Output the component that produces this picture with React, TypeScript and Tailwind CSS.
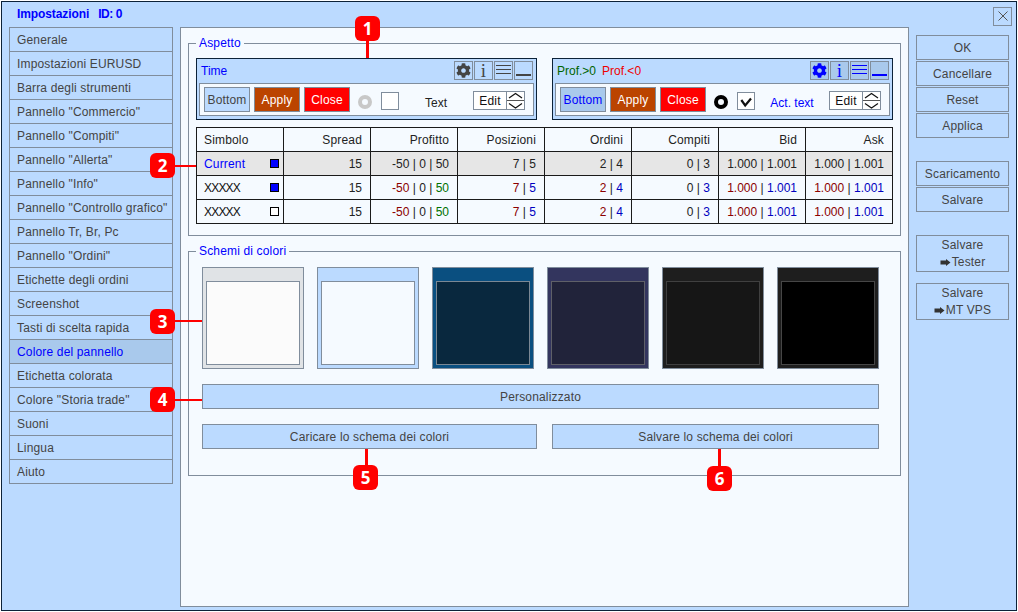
import { FaCog } from "react-icons/fa";

const menu = [
  "Generale",
  "Impostazioni EURUSD",
  "Barra degli strumenti",
  'Pannello "Commercio"',
  'Pannello "Compiti"',
  'Pannello "Allerta"',
  'Pannello "Info"',
  'Pannello "Controllo grafico"',
  "Pannello Tr, Br, Pc",
  'Pannello "Ordini"',
  "Etichette degli ordini",
  "Screenshot",
  "Tasti di scelta rapida",
  "Colore del pannello",
  "Etichetta colorata",
  'Colore "Storia trade"',
  "Suoni",
  "Lingua",
  "Aiuto",
];

const swatches = [
  { outer: "bg-[#e0e3e6] border-[#808d9c]", inner: "bg-[#fbfbfb] border-[#808d9c]" },
  { outer: "bg-[#bbdaff] border-[#808d9c]", inner: "bg-[#f5faff] border-[#808d9c]" },
  { outer: "bg-[#0a4f80] border-[#808d9c]", inner: "bg-[#09283e] border-[#7b8894]" },
  { outer: "bg-[#33355e] border-[#808d9c]", inner: "bg-[#21233a] border-[#5f6068]" },
  { outer: "bg-[#1e1e1e] border-[#808d9c]", inner: "bg-[#161616] border-[#404040]" },
  { outer: "bg-[#1e1e1e] border-[#808d9c]", inner: "bg-black border-[#464646]" },
];

const Btn = ({ children, className = "" }: { children: React.ReactNode; className?: string }) => (
  <div className={`flex items-center justify-center border border-[#808d9c] bg-[#bbdaff] text-[#444] ${className}`}>
    {children}
  </div>
);

const Arrow = () => (
  <svg width="11" height="7" viewBox="0 0 11 7" className="mr-[1px]">
    <path d="M0.5 1.5h5.5V0l4.5 3.5-4.5 3.5V5.5H0.5z" fill="#333" />
  </svg>
);

// Titlebar + button row preview, one for inactive and one for active colours
const PanelPreview = ({ active }: { active: boolean }) => {
  const ink = active ? "#0000ff" : "#444444";
  const iconBox = `flex h-[19px] w-[19px] items-center justify-center border border-[#808d9c] ${
    active ? "bg-[#a9c9ec]" : "bg-[#bbdaff]"
  }`;
  return (
    <div className="h-[62px] w-[341px] border border-[#0c2238] bg-[#bbdaff]">
      <div className="flex h-[24px] items-start pr-[3px]">
        <div className="flex h-[24px] flex-1 items-center pl-[4px] tracking-normal">
          {active ? (
            <>
              <span className="text-[#006400]">Prof.&gt;0</span>
              <span className="ml-[6px] text-[#ee0000]">Prof.&lt;0</span>
            </>
          ) : (
            <span className="text-[#0000ff]">Time</span>
          )}
        </div>
        <div className="mt-[2px] flex gap-[1px]">
          <div className={iconBox}>
            <FaCog size={15} color={ink} />
          </div>
          <div className={`${iconBox} font-['Liberation_Serif'] text-[19px] leading-none`} style={{ color: ink }}>
            i
          </div>
          <div className={iconBox}>
            <svg width="15" height="11" viewBox="0 0 15 11">
              <path d="M0 .5h15M0 4.5h15M0 8.5h15" stroke={ink} strokeWidth="1" />
            </svg>
          </div>
          <div className={iconBox}>
            <svg width="15" height="15" viewBox="0 0 15 15">
              <path d="M0 12h15" stroke={ink} strokeWidth="2" />
            </svg>
          </div>
        </div>
      </div>
      <div className="mx-[2px] flex h-[33px] items-start border border-[#808d9c] bg-[#f5faff] pl-[4px]">
        <div
          className={`mt-[3px] flex h-[25px] w-[46px] items-center justify-center border border-[#808d9c] ${
            active ? "bg-[#a9c9ec] text-[#0000ff]" : "bg-[#bbdaff] text-[#444]"
          }`}
        >
          Bottom
        </div>
        <div className="mt-[3px] ml-[4px] flex h-[25px] w-[46px] items-center justify-center border border-[#808d9c] bg-[#bb4400] text-white">
          Apply
        </div>
        <div className="mt-[3px] ml-[4px] flex h-[25px] w-[46px] items-center justify-center border border-[#808d9c] bg-[#ff0000] text-white">
          Close
        </div>
        <div
          className={`mt-[11px] ml-[8px] h-[14px] w-[14px] rounded-full border-[4px] ${
            active ? "border-black" : "border-[#c8c8c8]"
          }`}
        />
        <div className="mt-[8px] ml-[9px] h-[18px] w-[18px] border border-[#808d9c] bg-white">
          {active && (
            <svg width="16" height="16" viewBox="0 0 16 16">
              <path d="M3.3 7 7.2 12.5 13 5.5" fill="none" stroke="#111" strokeWidth="2.2" />
            </svg>
          )}
        </div>
        <div className={`mt-[12px] flex-1 text-center tracking-normal ${active ? "text-[#0000ff]" : "text-[#222]"}`}>
          {active ? "Act. text" : "Text"}
        </div>
        <div className="mt-[7px] mr-[8px] flex h-[19px] w-[52px] border border-[#808d9c] bg-white">
          <div className="flex w-[33px] items-center justify-center border-r border-[#808d9c] text-[#111]">Edit</div>
          <svg width="17" height="17" viewBox="0 0 17 17">
            <path d="M2 6 8.5 1.5 15 6M2 11.5 8.5 16 15 11.5" fill="none" stroke="#111" strokeWidth="1.2" />
            <path d="M0 8.5h17" stroke="#555" strokeWidth="1" />
          </svg>
        </div>
      </div>
    </div>
  );
};

const red = "text-[#8b0000]";
const blue = "text-[#0000c0]";
const green = "text-[#007000]";

const Pair = ({ a, b, color }: { a: string; b: string; color: boolean }) => (
  <>
    <span className={color ? red : ""}>{a}</span> | <span className={color ? blue : ""}>{b}</span>
  </>
);

const DataRow = ({ name, square, colored }: { name: string; square: string; colored: boolean }) => {
  const td = "border border-[#1a1a1a] px-[8px] text-right tracking-normal";
  return (
    <tr className={`h-[24px] text-[#222] ${colored ? "" : "bg-[#e6e6e6]"}`}>
      <td className="border border-[#1a1a1a] pl-[7px] pr-[4px]">
        <div className={`flex items-center justify-between ${colored ? "text-[#111]" : "text-[#0000ff]"}`}>
          <span className={colored ? "tracking-[-0.8px]" : ""}>{name}</span>
          <span className={`h-[9px] w-[9px] border border-black ${square}`} />
        </div>
      </td>
      <td className={td}>15</td>
      <td className={td}>
        <span className={colored ? red : ""}>-50</span> | 0 | <span className={colored ? green : ""}>50</span>
      </td>
      <td className={td}>
        <Pair a="7" b="5" color={colored} />
      </td>
      <td className={td}>
        <Pair a="2" b="4" color={colored} />
      </td>
      <td className={td}>
        0 | <span className={colored ? blue : ""}>3</span>
      </td>
      <td className={td}>
        <Pair a="1.000" b="1.001" color={colored} />
      </td>
      <td className={td}>
        <Pair a="1.000" b="1.001" color={colored} />
      </td>
    </tr>
  );
};

const Marker = ({ n, className }: { n: number; className: string }) => (
  <div
    className={`absolute flex h-[25px] w-[25px] items-center justify-center rounded-[6px] bg-[#ff0000] font-['Open_Sans'] text-[17px] font-bold tracking-normal text-white ${className}`}
  >
    {n}
  </div>
);

export default function App() {
  return (
    <div className="relative h-[612px] w-[1018px] overflow-hidden bg-white pt-[1px] pl-[1px] font-['Liberation_Sans',sans-serif] text-[12px] leading-[14px] tracking-[0.16px]">
      <div className="h-[610px] w-[1016px] border border-[#0c2238] bg-[#bbdaff]">
        {/* Title */}
        <div className="flex h-[25px] items-center justify-between pr-[4px] pl-[15px]">
          <div className="mb-[2px] flex gap-[9px] font-bold text-[#0000ff]">
            <span className="tracking-[-0.1px]">Impostazioni</span>
            <span className="tracking-[-0.4px]">ID: 0</span>
          </div>
          <div className="mt-[3px] flex h-[19px] w-[19px] items-center justify-center border border-[#808d9c]">
            <svg width="10" height="10" viewBox="0 0 10 10">
              <path d="M.5.5l9 9M9.5.5l-9 9" stroke="#555" strokeWidth="1" />
            </svg>
          </div>
        </div>

        <div className="flex items-start gap-[7px] pl-[7px]">
          {/* Menu */}
          <div className="flex w-[164px] flex-col">
            {menu.map((item) => (
              <div
                key={item}
                className={`-mb-[1px] flex h-[25px] items-center border border-[#808d9c] pl-[7px] ${
                  item === "Colore del pannello" ? "bg-[#a9c9ec] text-[#0000ff]" : "text-[#444]"
                }`}
              >
                {item}
              </div>
            ))}
          </div>

          {/* Main */}
          <div className="h-[580px] w-[729px] border border-[#808d9c] bg-[#f5faff] px-[7px] pt-[15px]">
            <div className="relative h-[193px] border border-[#808d9c] px-[7px] pt-[14px]">
              <span className="absolute -top-[8px] left-[7px] bg-[#f5faff] px-[3px] text-[#0000ff]">Aspetto</span>
              <div className="flex gap-[15px]">
                <PanelPreview active={false} />
                <PanelPreview active={true} />
              </div>
              <table className="mt-[7px] w-[697px] table-fixed border-collapse">
                <thead>
                  <tr className="h-[24px] text-[#222]">
                    <th className="border border-[#1a1a1a] pr-[8px] pl-[7px] text-left font-normal">Simbolo</th>
                    {["Spread", "Profitto", "Posizioni", "Ordini", "Compiti", "Bid", "Ask"].map((h) => (
                      <th key={h} className="border border-[#1a1a1a] px-[8px] text-right font-normal">
                        {h}
                      </th>
                    ))}
                  </tr>
                </thead>
                <tbody>
                  <DataRow name="Current" square="bg-[#0000ff]" colored={false} />
                  <DataRow name="XXXXX" square="bg-[#0000ff]" colored={true} />
                  <DataRow name="XXXXX" square="bg-white" colored={true} />
                </tbody>
              </table>
            </div>

            <div className="relative mt-[15px] h-[225px] border border-[#808d9c] px-[13px] pt-[15px]">
              <span className="absolute -top-[8px] left-[7px] bg-[#f5faff] px-[3px] text-[#0000ff]">
                Schemi di colori
              </span>
              <div className="flex gap-[13px]">
                {swatches.map((s, i) => (
                  <div key={i} className={`h-[102px] w-[102px] border px-[3px] pt-[13px] ${s.outer}`}>
                    <div className={`h-[84px] w-[94px] border ${s.inner}`} />
                  </div>
                ))}
              </div>
              <Btn className="mt-[15px] h-[25px] w-[677px]">Personalizzato</Btn>
              <div className="mt-[15px] flex gap-[15px]">
                <Btn className="h-[25px] w-[335px]">Caricare lo schema dei colori</Btn>
                <Btn className="h-[25px] w-[327px]">Salvare lo schema dei colori</Btn>
              </div>
            </div>
          </div>

          {/* Right buttons */}
          <div className="flex w-[93px] flex-col pt-[8px]">
            <Btn className="h-[25px]">OK</Btn>
            <Btn className="mt-[1px] h-[25px]">Cancellare</Btn>
            <Btn className="mt-[1px] h-[25px]">Reset</Btn>
            <Btn className="mt-[1px] h-[25px]">Applica</Btn>
            <Btn className="mt-[23px] h-[25px]">Scaricamento</Btn>
            <Btn className="mt-[1px] h-[25px]">Salvare</Btn>
            <Btn className="mt-[23px] h-[37px] flex-col leading-[17px]">
              <span>Salvare</span>
              <span className="flex items-center">
                <Arrow />
                Tester
              </span>
            </Btn>
            <Btn className="mt-[11px] h-[37px] flex-col leading-[17px]">
              <span>Salvare</span>
              <span className="flex items-center">
                <Arrow />
                MT VPS
              </span>
            </Btn>
          </div>
        </div>
      </div>

      {/* Callouts */}
      <div className="absolute top-[41px] left-[366px] h-[17px] w-[3px] bg-[#ff0000]" />
      <Marker n={1} className="top-[16px] left-[355px]" />
      <div className="absolute top-[165px] left-[175px] h-[2px] w-[21px] bg-[#ff0000]" />
      <Marker n={2} className="top-[153px] left-[150px]" />
      <div className="absolute top-[320px] left-[175px] h-[2px] w-[27px] bg-[#ff0000]" />
      <Marker n={3} className="top-[309px] left-[150px]" />
      <div className="absolute top-[399px] left-[175px] h-[2px] w-[27px] bg-[#ff0000]" />
      <Marker n={4} className="top-[387px] left-[150px]" />
      <div className="absolute top-[449px] left-[365px] h-[16px] w-[3px] bg-[#ff0000]" />
      <Marker n={5} className="top-[465px] left-[353px]" />
      <div className="absolute top-[449px] left-[718px] h-[17px] w-[3px] bg-[#ff0000]" />
      <Marker n={6} className="top-[466px] left-[707px]" />
    </div>
  );
}
